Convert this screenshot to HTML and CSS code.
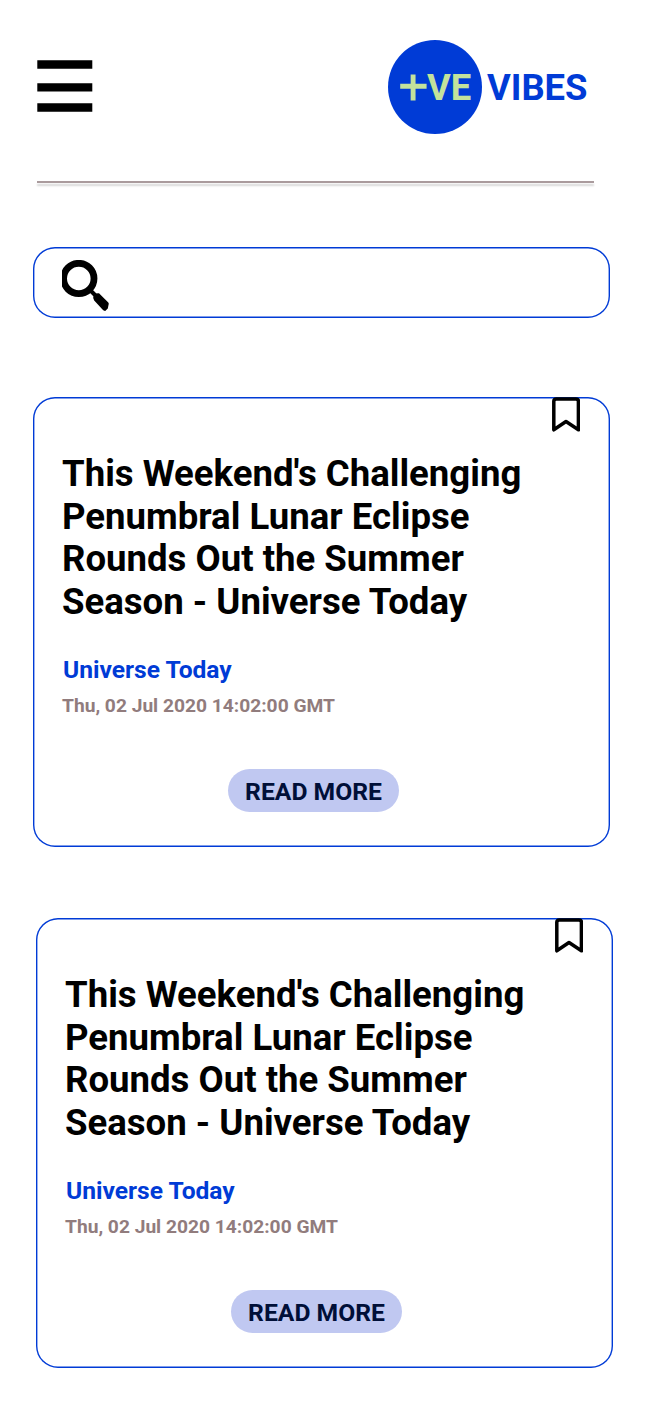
FILE: index.html
```html
<!DOCTYPE html>
<html lang="en">
<head>
<meta charset="utf-8">
<title>+VE VIBES</title>
<link rel="stylesheet" href="styles.css">
</head>
<body>
<header class="header">
  <svg class="menu" width="56" height="52" viewBox="0 0 56 52"><path d="M.3.3h55v8.4h-55zM.3 23.2h55v8.4h-55zM.3 43.3h55v8.4h-55z"/></svg>
  <div class="logo"><span class="disc"><svg class="plus" width="27" height="27" viewBox="0 0 27 27"><path d="M13.1.4v26M.2 12.3h26.4" stroke="#c3e29c" stroke-width="4.9"/></svg><span class="ve">VE</span></span><span class="vibes">VIBES</span></div>
</header>
<hr class="rule">
<div class="search">
  <svg width="48" height="52" viewBox="0 0 48 52"><circle cx="16.8" cy="18.5" r="15.2" fill="none" stroke="#000" stroke-width="6.8"/><path d="M28 30l5 5" stroke="#000" stroke-width="4"/><path d="M31.8 33.5L37 33.2L46.3 42.5Q47.2 43.5 46.5 45L45.8 48.5L43.2 51Q41.5 50.5 40.5 49.5L32.2 40.5L31.2 38z"/></svg>
</div>
<main class="feed">
  <article class="card">
    <svg class="mark" width="28" height="35" viewBox="0 0 28 35"><path d="M1.8 32.8V4.2q0-2.3 2.5-2.3h19.6q2.5 0 2.5 2.3v28.6L14 24.5z" fill="none" stroke="#000" stroke-width="3.5" stroke-linejoin="round"/></svg>
    <h2 class="title">This Weekend's Challenging<br>Penumbral Lunar Eclipse<br>Rounds Out the Summer<br>Season - Universe Today</h2>
    <p class="source">Universe Today</p>
    <p class="date">Thu, 02 Jul 2020 14:02:00 GMT</p>
    <a class="more">READ MORE</a>
  </article>
  <article class="card second">
    <svg class="mark" width="28" height="35" viewBox="0 0 28 35"><path d="M1.8 32.8V4.2q0-2.3 2.5-2.3h19.6q2.5 0 2.5 2.3v28.6L14 24.5z" fill="none" stroke="#000" stroke-width="3.5" stroke-linejoin="round"/></svg>
    <h2 class="title">This Weekend's Challenging<br>Penumbral Lunar Eclipse<br>Rounds Out the Summer<br>Season - Universe Today</h2>
    <p class="source">Universe Today</p>
    <p class="date">Thu, 02 Jul 2020 14:02:00 GMT</p>
    <a class="more">READ MORE</a>
  </article>
</main>
</body>
</html>
```
FILE: styles.css
```css
* { box-sizing: border-box; }
body { margin: 0; padding: 40px 36px 50px 33px; background: #fff; font-family: Roboto, "Liberation Sans", sans-serif; }
.header { display: flex; justify-content: space-between; align-items: flex-start; padding: 0 22.5px 0 4px; height: 141px; }
.menu { margin-top: 20px; }
.logo { display: flex; align-items: center; font-size: 36.4px; font-weight: 700; color: #003bd6; white-space: nowrap; }
.disc { display: flex; align-items: center; width: 94px; height: 94px; padding-left: 12px; border-radius: 50%; background: #003bd6; color: #c3e29c; }
.plus { flex: none; }
.vibes { margin-left: 5px; }
.rule { width: 557px; height: 2px; margin: 0 0 0 4px; border: 0; background: #aa9b9d; box-shadow: 0 3px 2px rgba(0, 0, 0, .16); }
.search { width: 577px; height: 71px; margin-top: 64px; padding: 13px 29px; box-shadow: inset 0 0 0 1.4px #003bd6; border-radius: 22px; }
.feed { margin-top: 79px; }
.card { position: relative; display: flex; flex-direction: column; align-items: flex-start; width: 577px; height: 450px; padding: 56px 29px 0; box-shadow: inset 0 0 0 1.4px #003bd6; border-radius: 22px; }
.second { margin: 71px 0 0 3px; }
.mark { position: absolute; top: 0; right: 30px; }
.title { margin: 0; font-size: 36.57px; font-weight: 700; line-height: 42.65px; white-space: nowrap; }
.source { margin: 32px 0 0 1px; font-size: 24.6px; line-height: 28px; font-weight: 700; color: #003bd6; }
.date { margin: 10px 0 0; font-size: 19.2px; line-height: 23px; font-weight: 700; color: #917c7d; }
.more { display: flex; align-items: center; justify-content: center; width: 171px; height: 43px; margin: 52px 0 0 166px; padding-top: 3px; border-radius: 22px; background: #c0c8f1; color: #000f38; font-size: 24.7px; font-weight: 700; white-space: nowrap; }
```
